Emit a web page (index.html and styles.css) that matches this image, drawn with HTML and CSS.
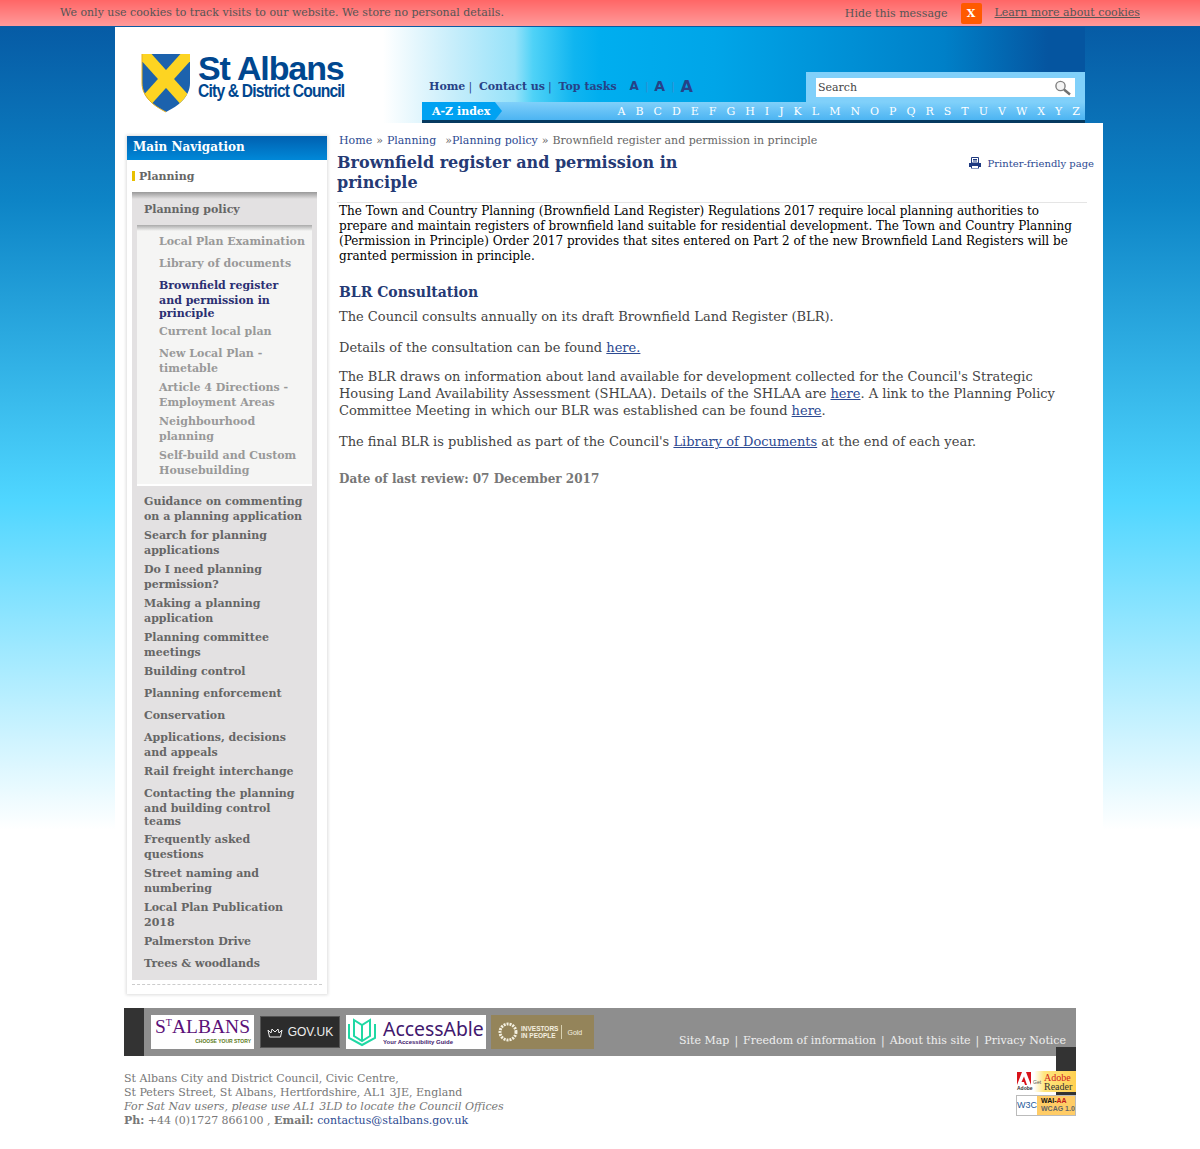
FILE: index.html
```html
<!DOCTYPE html>
<html lang="en">
<head>
    <meta charset="UTF-8">
    <meta name="viewport" content="width=device-width, initial-scale=1.0">
    <title>Brownfield register and permission in principle</title>
    <link rel="stylesheet" href="styles.css">
</head>
<body>
    <div class="cookie-bar">
        <span class="cookie-text">We only use cookies to track visits to our website. We store no personal details.</span>
        <span class="cookie-hide">Hide this message</span>
        <span class="cookie-close">X</span>
        <a class="cookie-more" href="#">Learn more about cookies</a>
    </div>
    <div class="wrapper">
        <div class="header">
            <div class="logo">
                <svg class="shield" width="50" height="60" viewBox="0 0 50 60">
                    <defs><clipPath id="shieldClip"><path d="M1 1H49V30C49 44 37 53 25 59C13 53 1 44 1 30Z"/></clipPath></defs>
                    <path d="M1 1H49V30C49 44 37 53 25 59C13 53 1 44 1 30Z" fill="#1c62ad"/>
                    <g clip-path="url(#shieldClip)" stroke="#fdd422" stroke-width="12">
                        <path d="M-2 -4L52 56"/>
                        <path d="M52 -4L-2 56"/>
                    </g>
                    <path d="M1 1V30C1 44 13 53 25 59" fill="none" stroke="#e9b01c" stroke-width="1"/>
                </svg>
                <div class="logo-text">
                    <div class="logo-name">St Albans</div>
                    <div class="logo-sub">City &amp; District Council</div>
                </div>
            </div>
            <div class="header-tools">
                <div class="tools-row">
                    <div class="top-links">
                        <a href="#">Home</a><span class="pipe">|</span>
                        <a href="#">Contact us</a><span class="pipe">|</span>
                        <a href="#">Top tasks</a>
                    </div>
                    <div class="text-size">
                        <span class="size-s">A</span><span class="size-pipe">|</span><span class="size-m">A</span><span class="size-pipe">|</span><span class="size-l">A</span>
                    </div>
                    <div class="search-panel">
                        <div class="search-box">
                            <span>Search</span>
                            <svg width="18" height="16" viewBox="0 0 18 16">
                                <circle cx="6.5" cy="6" r="4.6" fill="#f4f4f4" stroke="#808080" stroke-width="1.4"/>
                                <path d="M10 9.5L16 14.5" stroke="#707070" stroke-width="2.4"/>
                            </svg>
                        </div>
                    </div>
                </div>
                <div class="az-bar">
                    <span class="az-label">A-Z index</span>
                    <div class="az-letters">
                        <a>A</a><a>B</a><a>C</a><a>D</a><a>E</a><a>F</a><a>G</a><a>H</a><a>I</a><a>J</a><a>K</a><a>L</a><a>M</a><a>N</a><a>O</a><a>P</a><a>Q</a><a>R</a><a>S</a><a>T</a><a>U</a><a>V</a><a>W</a><a>X</a><a>Y</a><a>Z</a>
                    </div>
                </div>
            </div>
        </div>
        <div class="main">
            <div class="sidebar">
                <div class="nav-title">Main Navigation</div>
                <div class="nav-section">Planning</div>
                <div class="nav-box">
                    <a class="nav-item nav-open" href="#">Planning policy</a>
                    <div class="sub-nav">
                        <a class="sub-item" href="#">Local Plan Examination</a>
                        <a class="sub-item" href="#">Library of documents</a>
                        <a class="sub-item sub-current" href="#"><span>Brownfield register</span><span>and permission in</span><span class="tight">principle</span></a>
                        <a class="sub-item" href="#">Current local plan</a>
                        <a class="sub-item" href="#">New Local Plan - timetable</a>
                        <a class="sub-item" href="#">Article 4 Directions - Employment Areas</a>
                        <a class="sub-item" href="#">Neighbourhood planning</a>
                        <a class="sub-item" href="#">Self-build and Custom Housebuilding</a>
                    </div>
                    <a class="nav-item" href="#">Guidance on commenting on a planning application</a>
                    <a class="nav-item" href="#">Search for planning applications</a>
                    <a class="nav-item" href="#">Do I need planning permission?</a>
                    <a class="nav-item" href="#">Making a planning application</a>
                    <a class="nav-item" href="#">Planning committee meetings</a>
                    <a class="nav-item" href="#">Building control</a>
                    <a class="nav-item" href="#">Planning enforcement</a>
                    <a class="nav-item" href="#">Conservation</a>
                    <a class="nav-item" href="#">Applications, decisions and appeals</a>
                    <a class="nav-item" href="#">Rail freight interchange</a>
                    <a class="nav-item" href="#"><span>Contacting the planning</span><span>and building control</span><span class="tight">teams</span></a>
                    <a class="nav-item" href="#">Frequently asked questions</a>
                    <a class="nav-item" href="#">Street naming and numbering</a>
                    <a class="nav-item" href="#">Local Plan Publication 2018</a>
                    <a class="nav-item" href="#">Palmerston Drive</a>
                    <a class="nav-item" href="#">Trees &amp; woodlands</a>
                </div>
                <div class="nav-end"></div>
            </div>
            <div class="content">
                <div class="breadcrumb">
                    <a href="#">Home</a><span class="crumb-sep">»</span><a href="#">Planning</a><span class="crumb-sep crumb-tight">»</span><a href="#">Planning policy</a><span class="crumb-sep">»</span><span>Brownfield register and permission in principle</span>
                </div>
                <div class="title-row">
                    <h1>Brownfield register and permission in principle</h1>
                    <a class="printer" href="#">
                        <svg width="12" height="12" viewBox="0 0 12 12">
                            <path d="M2.500 .5H9.500V6H2.500Z" fill="#fff" stroke="#1f3a80"/>
                            <path d="M4 2.500H8M4 4H8" stroke="#1f3a80"/>
                            <path d="M0 6H12V10H10V11.500H2V10H0Z" fill="#1f3a80"/>
                            <path d="M3 9H9V11H3Z" fill="#fff"/>
                        </svg>
                        Printer-friendly page
                    </a>
                </div>
                <p class="intro">The Town and Country Planning (Brownfield Land Register) Regulations 2017 require local planning authorities to prepare and maintain registers of brownfield land suitable for residential development. The Town and Country Planning (Permission in Principle) Order 2017 provides that sites entered on Part 2 of the new Brownfield Land Registers will be granted permission in principle.</p>
                <h2>BLR Consultation</h2>
                <p>The Council consults annually on its draft Brownfield Land Register (BLR).</p>
                <p class="close-next">Details of the consultation can be found <a href="#">here.</a></p>
                <p>The BLR draws on information about land available for development collected for the Council's Strategic Housing Land Availability Assessment (SHLAA). Details of the SHLAA are <a href="#">here</a>. A link to the Planning Policy Committee Meeting in which our BLR was established can be found <a href="#">here</a>.</p>
                <p>The final BLR is published as part of the Council's <a href="#">Library of Documents</a> at the end of each year.</p>
                <p class="review">Date of last review: 07 December 2017</p>
            </div>
        </div>
        <div class="footer-bar">
            <div class="footer-logos">
                <div class="badge badge-stalbans"><b>S<sup>T</sup>ALBANS</b><i>CHOOSE YOUR STORY</i></div>
                <div class="badge badge-gov">
                    <svg width="16" height="12" viewBox="0 0 16 12"><path d="M1 4L4 7L5 3L8 6L11 3L12 7L15 4L13.500 11H2.500Z" fill="none" stroke="#eee"/></svg>
                    GOV.UK
                </div>
                <div class="badge badge-access">
                    <svg width="28" height="30" viewBox="0 0 28 30" fill="none" stroke="#1fd8a4" stroke-width="2">
                        <path d="M1 7V21L14 28L27 21V7"/>
                        <path d="M6 3L14 8L22 3V19L14 24L6 19Z"/>
                        <path d="M14 8V24"/>
                    </svg>
                    <div class="access-text"><b>AccessAble</b><i>Your Accessibility Guide</i></div>
                </div>
                <div class="badge badge-iip">
                    <svg width="20" height="20" viewBox="0 0 20 20"><circle cx="10" cy="10" r="8" fill="none" stroke="#f4f0e0" stroke-width="3" stroke-dasharray="2 1"/></svg>
                    <span class="iip-name">INVESTORS<br>IN PEOPLE</span>
                    <span class="iip-gold">Gold</span>
                </div>
            </div>
            <div class="footer-links">
                <a href="#">Site Map</a><span class="pipe">|</span><a href="#">Freedom of information</a><span class="pipe">|</span><a href="#">About this site</a><span class="pipe">|</span><a href="#">Privacy Notice</a>
            </div>
        </div>
        <div class="footer-info">
            <div class="address">
                St Albans City and District Council, Civic Centre,<br>
                St Peters Street, St Albans, Hertfordshire, AL1 3JE, England<br>
                <em>For Sat Nav users, please use AL1 3LD to locate the Council Offices</em><br>
                <b>Ph:</b> +44 (0)1727 866100 , <b>Email:</b> <a href="#">contactus@stalbans.gov.uk</a>
            </div>
            <div class="standards">
                <div class="std std-adobe">
                    <div class="adobe-mark">
                        <svg width="14" height="13" viewBox="0 0 14 13"><path d="M0 0H5L0 13ZM9 0H14V13ZM7 4.500L10 13H8L7 10H4.500Z" fill="#d8121a"/></svg>
                        <span>Adobe</span>
                    </div>
                    <span class="adobe-get">Get</span>
                    <span class="adobe-name">Adobe<br><b>Reader</b></span>
                </div>
                <div class="std std-wai"><span class="wai-w3c">W3C</span><span class="wai-name"><b>WAI-<u>AA</u></b><br>WCAG 1.0</span></div>
            </div>
        </div>
    </div>
</body>
</html>
```

FILE: styles.css
```css
body {
    margin: 0;
    font-family: "DejaVu Serif", serif;
    color: #444;
    background: #fff linear-gradient(to bottom, #0555a0 0, #0d84c6 200px, #4fd6ff 500px, #fff 830px) no-repeat;
}
a {
    color: #2d4a92;
}
.cookie-bar {
    display: flex;
    align-items: center;
    height: 26px;
    padding: 0 60px;
    font-size: 11px;
    color: #555;
    background: linear-gradient(to bottom, #ff6666, #ff9a9a);
    border-bottom: 1px solid #0b5aa2;
}
.cookie-text {
    flex: 1;
    margin-top: -2px;
}
.cookie-close {
    width: 21px;
    height: 21px;
    margin: 0 13px;
    line-height: 21px;
    text-align: center;
    font-weight: bold;
    color: #fff;
    background: #ff5a00;
    border-radius: 2px;
}
.cookie-more {
    margin-top: -2px;
    color: #555;
}
.wrapper {
    width: 988px;
    margin-left: 115px;
}
.header {
    display: flex;
    width: 970px;
    height: 96px;
    background: linear-gradient(to right, #fff 268px, #c8eefb 337px, #96e2f9 400px, #4fd2f7 418px, #10b5f0 459px, #00aeef 485px, #00a5e8 600px, #0080c8 829px, #0555a0 933px);
}
.logo {
    display: flex;
    width: 307px;
    padding: 26px 0 0 26px;
    box-sizing: border-box;
}
.shield {
    margin-right: 7px;
}
.logo-text {
    color: #00478f;
    font-family: "Liberation Sans", sans-serif;
    font-weight: bold;
}
.logo-name {
    font-size: 34px;
    line-height: 31px;
    letter-spacing: -1.100px;
}
.logo-sub {
    margin-top: -2px;
    font-size: 18px;
    line-height: 19px;
    letter-spacing: -.95px;
    white-space: nowrap;
    transform: scaleX(.87);
    transform-origin: left;
}
.header-tools {
    flex: 1;
    display: flex;
    flex-direction: column;
    justify-content: flex-end;
}
.tools-row {
    display: flex;
    align-items: flex-end;
}
.top-links {
    height: 30px;
    padding-left: 7px;
    line-height: 29px;
    font-size: 11px;
    font-weight: bold;
    white-space: nowrap;
}
.top-links a {
    text-decoration: none;
    color: #264287;
}
.pipe {
    margin: 0 5px;
    font-weight: normal;
}
.top-links .pipe {
    margin: 0 3px;
    color: #264287;
}
.text-size {
    display: flex;
    align-items: center;
    height: 28px;
    padding: 0 0 2px 13px;
    color: #264287;
    font-family: "DejaVu Sans", sans-serif;
    font-weight: bold;
}
.size-s { font-size: 12px; }
.size-m { font-size: 14px; }
.size-l { font-size: 16px; }
.size-pipe {
    margin: 0 6px;
    font-size: 10px;
    font-weight: normal;
    color: #3b8ccc;
}
.search-panel {
    width: 279px;
    height: 30px;
    margin-left: auto;
    padding: 6px 10px 0 10px;
    box-sizing: border-box;
    background: #80d0fa;
}
.search-box {
    display: flex;
    justify-content: space-between;
    align-items: center;
    height: 19px;
    padding: 0 3px 0 2px;
    font-size: 11px;
    color: #444;
    background: #fff;
}
.az-bar {
    display: flex;
    justify-content: space-between;
    height: 18px;
    line-height: 19px;
    font-size: 11px;
    color: #fff;
    background: linear-gradient(to bottom, #80d0fa, #4cb4f2);
    border-bottom: 3px solid #063a60;
}
.az-label {
    position: relative;
    width: 63px;
    padding-left: 10px;
    font-weight: bold;
    background: #00a2f2;
}
.az-label::after {
    content: "";
    position: absolute;
    left: 100%;
    top: 0;
    border-left: 7px solid #00a2f2;
    border-top: 9px solid transparent;
    border-bottom: 9px solid transparent;
}
.az-letters {
    display: flex;
    gap: 10px;
    padding-right: 5px;
}
.az-letters a {
    color: #fff;
}
.main {
    display: flex;
    padding: 13px 9px 14px 12px;
    background: #fff;
}
.sidebar {
    flex: none;
    width: 200px;
    height: 858px;
    box-shadow: 0 0 3px 1px #ddd;
}
.nav-title {
    height: 24px;
    padding-left: 6px;
    line-height: 22px;
    font-size: 12px;
    font-weight: bold;
    color: #fff;
    background: linear-gradient(to bottom, #0060b0, #0088d8);
}
.nav-section {
    height: 32px;
    margin-left: 5px;
    line-height: 34px;
    font-size: 11px;
    font-weight: bold;
    color: #666;
}
.nav-section::before {
    content: "";
    display: inline-block;
    width: 3px;
    height: 10px;
    margin-right: 4px;
    vertical-align: -1px;
    background: #e8c000;
}
.nav-box {
    margin: 0 10px 0 5px;
    padding: 2px 0 2px;
    background: linear-gradient(to bottom, #999, #e3e1e2 7px);
}
.nav-item, .sub-item {
    display: block;
    box-sizing: border-box;
    min-height: 22px;
    padding-bottom: 4px;
    line-height: 15px;
    font-size: 11px;
    font-weight: bold;
    text-decoration: none;
}
.nav-item {
    padding-left: 12px;
    padding-right: 10px;
    color: #666;
}
.nav-item span, .sub-item span {
    display: block;
}
.nav-item .tight, .sub-item .tight {
    line-height: 12px;
}
.nav-open {
    height: 31px;
    padding-top: 8px;
}
.sub-nav {
    margin: 0 5px 8px 5px;
    padding: 9px 0 2px;
    background: linear-gradient(to bottom, #aaa, #f5f5f4 6px);
    border-bottom: 2px solid #fff;
}
.sub-item {
    padding-left: 22px;
    padding-right: 5px;
    color: #999;
}
.sub-current {
    color: #2b2f72;
}
.nav-end {
    margin: 4px 5px 0 5px;
    border-top: 1px dashed #ccc;
}
.content {
    flex: 1;
    min-width: 0;
    padding-left: 10px;
    margin-top: -2px;
}
.breadcrumb {
    height: 19px;
    padding-left: 2px;
    font-size: 11px;
    line-height: 14px;
    color: #666;
}
.breadcrumb a {
    text-decoration: none;
}
.crumb-sep {
    margin: 0 4px;
}
.crumb-tight {
    margin-left: 9px;
    margin-right: 0;
}
.title-row {
    display: flex;
    justify-content: space-between;
    height: 49px;
    margin-right: 7px;
    border-bottom: 1px solid #e5e5e5;
}
h1 {
    width: 400px;
    margin: 0;
    font-size: 16px;
    line-height: 20px;
    color: #253a75;
}
.printer {
    display: flex;
    align-items: center;
    gap: 7px;
    height: 20px;
    margin-right: -7px;
    font-size: 10px;
    text-decoration: none;
}
.content p {
    margin: 0 14px 14px 2px;
    font-size: 13px;
    line-height: 17px;
}
.content .intro {
    margin-bottom: 18px;
    padding-top: 1px;
    font-size: 12px;
    line-height: 15px;
    color: #000;
}
h2 {
    margin: 0 0 6px 2px;
    font-size: 14px;
    line-height: 20px;
    color: #253a75;
}
.content .close-next {
    margin-bottom: 12px;
}
.content .review {
    margin-top: 21px;
    font-size: 12px;
    font-weight: bold;
    color: #777;
}
.footer-bar {
    display: flex;
    justify-content: space-between;
    width: 952px;
    height: 48px;
    margin-left: 9px;
    background: #8e8e8e;
    border-left: 20px solid #333;
    box-sizing: border-box;
}
.footer-logos {
    display: flex;
    gap: 6px;
    padding: 7px 0 0 7px;
}
.badge {
    height: 34px;
    box-sizing: border-box;
    display: flex;
    align-items: center;
    overflow: hidden;
}
.badge-stalbans {
    width: 103px;
    flex-direction: column;
    align-items: stretch;
    padding: 1px 3px 1px 4px;
    background: #fff;
    color: #5a1078;
}
.badge-stalbans b {
    font: 19.500px/21px "Liberation Serif", serif;
    white-space: nowrap;
}
.badge-stalbans sup {
    font-size: 10px;
    line-height: 0;
}
.badge-stalbans i {
    font: bold 5px/8px "Liberation Sans", sans-serif;
    color: #5a7a20;
    text-align: right;
}
.badge-gov {
    width: 80px;
    justify-content: center;
    gap: 5px;
    margin-top: 1px;
    height: 32px;
    background: #2c2c2c;
    border: 1px solid #555;
    color: #eee;
    font: 12px "Liberation Sans", sans-serif;
}
.badge-access {
    width: 140px;
    gap: 7px;
    padding-left: 2px;
    background: #fff;
    color: #42186e;
}
.access-text b {
    display: block;
    font: 19.400px/20px "Noto Sans", sans-serif;
}
.access-text i {
    display: block;
    font: bold 6px/7px "Liberation Sans", sans-serif;
}
.badge-iip {
    width: 103px;
    margin-left: -1px;
    gap: 3px;
    padding-left: 7px;
    background: #94845a;
    color: #f4f0e0;
    font-family: "Liberation Sans", sans-serif;
}
.iip-name {
    padding-right: 3px;
    font-size: 6.500px;
    font-weight: bold;
    line-height: 7px;
    border-right: 1px solid #d8d0b0;
}
.iip-gold {
    margin-left: 2px;
    font-size: 7px;
}
.footer-links {
    padding: 25px 10px 0 0;
    font-size: 11px;
    line-height: 15px;
    color: #eee;
}
.footer-links a {
    color: #eee;
    text-decoration: none;
}
.footer-info {
    display: flex;
    justify-content: space-between;
    width: 952px;
    margin-left: 9px;
    height: 93px;
}
.address {
    padding-top: 16px;
    font-size: 11px;
    line-height: 14px;
    color: #777;
}
.address a {
    text-decoration: none;
}
.standards {
    position: relative;
    width: 60px;
    margin-top: -9px;
    padding-top: 24px;
    box-sizing: border-box;
}
.standards::before {
    content: "";
    position: absolute;
    top: 0;
    right: 0;
    width: 20px;
    height: 48px;
    background: #333;
}
.std {
    position: relative;
    display: flex;
    height: 21px;
    box-sizing: border-box;
    overflow: hidden;
    font-family: "Liberation Sans", sans-serif;
}
.std-adobe {
    margin-bottom: 3px;
    align-items: center;
    background: linear-gradient(to right, #fff 18px, #ffe680 28px, #ffd050);
}
.adobe-mark {
    width: 17px;
    padding-left: 1px;
    box-sizing: border-box;
    line-height: 6px;
}
.adobe-mark svg {
    display: block;
}
.adobe-mark span {
    display: block;
    font-size: 5px;
    font-weight: bold;
    color: #333;
}
.adobe-get {
    width: 11px;
    font-size: 5px;
    color: #555;
}
.adobe-name {
    font-family: "Liberation Serif", serif;
    font-size: 10px;
    line-height: 9px;
    color: #d02020;
}
.adobe-name b {
    font-weight: normal;
    color: #333;
}
.std-wai {
    border: 1px solid #bbb;
}
.wai-w3c {
    width: 20px;
    font-size: 9px;
    line-height: 19px;
    color: #1f5a9a;
    background: #fff;
}
.wai-name {
    flex: 1;
    padding: 1px 0 0 4px;
    font-size: 7px;
    line-height: 8px;
    font-weight: bold;
    color: #666;
    background: #ffcc66;
}
.wai-name b {
    color: #111;
}
.wai-name u {
    color: #c01818;
    text-decoration: none;
}
```
